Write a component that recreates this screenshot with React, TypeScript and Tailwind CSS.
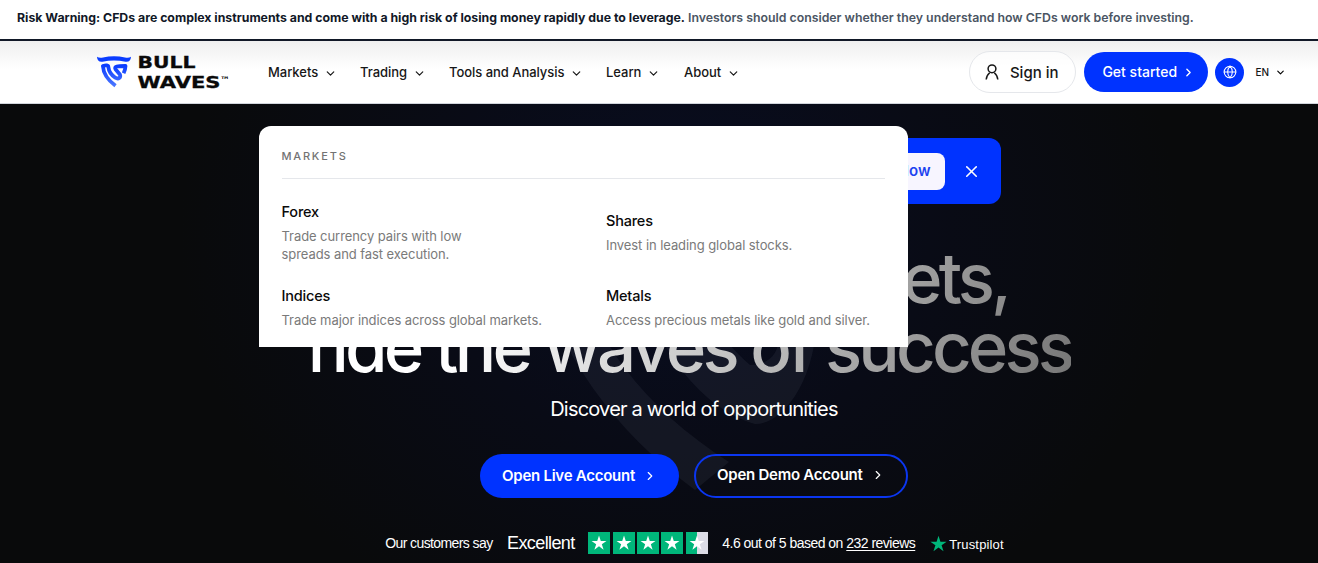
import { ChevronDown, ChevronRight, Globe, X } from 'lucide-react';

const NAV = [
  { label: 'Markets', width: 'w-[92px]' },
  { label: 'Trading', width: 'w-[89px]' },
  { label: 'Tools and Analysis', width: 'w-[157px]' },
  { label: 'Learn', width: 'w-[78px]' },
  { label: 'About', width: 'w-[60px]' },
];

const MARKETS = [
  { title: 'Forex', text: 'Trade currency pairs with low spreads and fast execution.', textWidth: 'w-[200px]' },
  { title: 'Shares', text: 'Invest in leading global stocks.', textWidth: 'w-[280px]' },
  { title: 'Indices', text: 'Trade major indices across global markets.', textWidth: 'w-[280px]' },
  { title: 'Metals', text: 'Access precious metals like gold and silver.', textWidth: 'w-[280px]' },
];

const STAR = 'M12 1.5l2.5 7.6h8l-6.5 4.7 2.5 7.7-6.5-4.8-6.5 4.8 2.5-7.7L1.5 9.1h8z';

function Logo() {
  return (
    <svg className="w-[134px] h-[38px] mt-[3px] shrink-0 overflow-visible" viewBox="0 0 134 38">
      <defs>
        <linearGradient id="bull" x1="0" y1="0" x2="0" y2="1">
          <stop offset="0" stopColor="#0a3cff" />
          <stop offset="1" stopColor="#4a76ff" />
        </linearGradient>
      </defs>
      <path fill="#0a3cff" d="M0 1.7C1.5 2.8 3.5 3 6 2.5 13 .9 21 .9 28 2.5c2.5.5 4.5.3 6-.8-.2 3.8-2.2 5.5-5.5 5-7.5-1.5-15.5-1.5-23 0C2.2 7.200.2 5.500 0 1.700z" />
      <path fill="none" stroke="url(#bull)" strokeWidth="3.8" strokeLinejoin="round" d="M18.500 30.800C10 24.500 6.300 18.500 5.900 11c3.200-1 5.300-.8 5.500 1.200.5 4.700 3 7.800 6.900 10.500 3.200 2 5.800-.2 4.600-3.300l-4.400-5.200c-1.500-3 1.500-3.100 10-3.200-.1 2.800-.7 4.800-1.900 7.300" />
      <g fontFamily="'DejaVu Sans', sans-serif" fontWeight="700" fill="#0a0a0a" stroke="#0a0a0a" strokeWidth="0.3">
        <text x="40.5" y="13" fontSize="15.5" textLength="58" lengthAdjust="spacingAndGlyphs">BULL</text>
        <text x="40.5" y="32.5" fontSize="15.5" textLength="83" lengthAdjust="spacingAndGlyphs">WAVES</text>
        <text x="123" y="27.5" fontSize="9" strokeWidth="0" textLength="10" lengthAdjust="spacingAndGlyphs">™</text>
      </g>
    </svg>
  );
}

function UserIcon() {
  return (
    <svg className="w-[14px] h-[16px] -mt-[2px]" viewBox="0 0 14 16" fill="none" stroke="#171717" strokeWidth="1.5">
      <circle cx="7" cy="4.8" r="3.9" />
      <path d="M1.2 15.5c.2-2.6 1.4-5 3.5-6.8M12.8 15.5c-.2-2.6-1.4-5-3.5-6.8" />
    </svg>
  );
}

function Header() {
  return (
    <header className="flex items-center h-[63px] pl-[97px] border-b border-gray-300 bg-linear-to-b from-[#efefef] from-0% via-white via-45% to-white">
      <Logo />
      <nav className="flex items-center ml-[37px] mt-[2px] text-[13px] tracking-[-0.04px] font-medium text-[#171717]">
        {NAV.map(item => (
          <button key={item.label} className={`flex items-center whitespace-nowrap ${item.width}`}>
            {item.label}
            <ChevronDown className="size-[13px] ml-[6px]" strokeWidth={2.2} />
          </button>
        ))}
      </nav>
      <div className="flex items-center ml-auto mr-[32.5px] text-[15px] font-medium">
        <button className="flex items-center w-[107px] h-[42px] pt-[2px] pl-[15px] gap-[11px] rounded-full border border-gray-200 bg-white/70 text-[#171717] whitespace-nowrap">
          <UserIcon />
          Sign in
        </button>
        <button className="flex items-center w-[124px] h-[40px] pl-[18.5px] ml-2 gap-[5px] rounded-full bg-[#0033ff] text-sm text-white whitespace-nowrap">
          Get started
          <ChevronRight className="size-[13px]" strokeWidth={2.5} />
        </button>
        <button className="flex items-center justify-center size-[29px] ml-[7.5px] rounded-full bg-[#0033ff] text-white">
          <Globe className="size-[14px]" strokeWidth={1.8} />
        </button>
        <span className="ml-[11px] text-[10px] text-[#171717]">EN</span>
        <ChevronDown className="size-[11px] ml-[5.5px]" strokeWidth={2.5} />
      </div>
    </header>
  );
}

function MarketsMenu() {
  return (
    <div className="absolute z-10 left-[258.5px] top-[22px] w-[649px] h-[221px] px-[23px] rounded-t-xl bg-white">
      <p className="h-[53px] pt-[21.5px] border-b border-gray-200 text-[11px] leading-4 font-medium tracking-[1.8px] text-[#737373]">MARKETS</p>
      <div className="grid grid-cols-[324.5px_1fr] grid-rows-[60px_42px] gap-y-[24px] items-center pt-[24px]">
        {MARKETS.map(m => (
          <a key={m.title} className="block">
            <p className="text-[14.5px] leading-[18px] font-medium tracking-[-0.2px] text-[#0a0a0a]">{m.title}</p>
            <p className={`mt-[6px] text-[13px] leading-[18px] tracking-[-0.07px] text-[#7a7a7a] ${m.textWidth}`}>{m.text}</p>
          </a>
        ))}
      </div>
    </div>
  );
}

function Stars() {
  return (
    <div className="flex gap-[2.4px] -mt-px">
      {[0, 1, 2, 3, 4].map(i => (
        <span key={i} className={i < 4 ? 'size-[22px] bg-[#00b67a]' : 'size-[22px] bg-linear-to-r from-[#00b67a] from-50% to-[#dcdce6] to-50%'}>
          <svg className="size-[22px] p-[2.5px]" viewBox="0 0 24 24" fill="#fff"><path d={STAR} /></svg>
        </span>
      ))}
    </div>
  );
}

function Hero() {
  return (
    <section className="relative h-[459px] overflow-hidden bg-[#090a0b] bg-[radial-gradient(ellipse_500px_430px_at_680px_130px,#080d22_0%,#090b16_50%,#090a0b_100%)] text-white">
      <svg className="absolute left-[480px] top-0 w-[440px] h-[459px]" viewBox="480 104 440 459" fill="#8090a8" fillOpacity="0.09">
        <path d="M520 200h45c6 110 60 195 164 262l-34 28C600 420 540 330 520 200z" />
        <path d="M620 200h45c10 70 40 125 85 165 25 0 38-20 22-60h45c2 75-35 120-62 119-70-20-125-115-135-224z" />
      </svg>
      <MarketsMenu />
      <div className="relative flex flex-col items-center pt-[34px] pl-[70px]">
        <div className="flex items-center justify-end w-[613px] h-[66px] pr-[20px] gap-[17px] rounded-xl bg-[#0033ff]">
          <button className="h-[37px] px-[14px] rounded-lg bg-[#f7f5ff] text-[15px] font-semibold text-[#1d43f0]">Claim Now</button>
          <X className="size-[19px]" strokeWidth={2} />
        </div>
        <h1 className="mt-[40px] -ml-[9px] text-center text-[69px] leading-[69px] font-medium tracking-[-3.85px] whitespace-nowrap bg-linear-[108deg] from-white from-22% to-[#777] bg-clip-text text-transparent">
          Conquer the markets,<br />ride the waves of success
        </h1>
        <p className="mt-[13px] text-[20px] leading-7 tracking-[-0.8px]">Discover a world of opportunities</p>
        <div className="flex mt-[31px] gap-[15px] text-[15px] font-semibold tracking-[-0.25px]">
          <button className="flex items-center w-[199px] h-[44px] pl-[22px] gap-2 rounded-full bg-[#0033ff] whitespace-nowrap">
            Open Live Account
            <ChevronRight className="size-[14px]" />
          </button>
          <button className="flex items-center w-[214px] h-[44px] pl-[21px] pb-[2px] gap-2 rounded-full border-2 border-[#0b36f0] whitespace-nowrap">
            Open Demo Account
            <ChevronRight className="size-[14px]" />
          </button>
        </div>
        <div className="flex items-center mt-[31.5px] ml-px font-['Liberation_Sans',sans-serif] text-[14px] tracking-[-0.6px] whitespace-nowrap">
          <span>Our customers say</span>
          <span className="ml-[14.5px] mr-[13.5px] text-[18px]">Excellent</span>
          <Stars />
          <span className="ml-[14.5px] tracking-[-0.52px]">4.6 out of 5 based on <u className="underline-offset-2">232 reviews</u></span>
          <svg className="size-[17px] ml-[15px]" viewBox="1 1 22 21" fill="#00b67a"><path d={STAR} /></svg>
          <span className="ml-[2px] mt-1 text-[13px] tracking-[0.15px]">Trustpilot</span>
        </div>
      </div>
    </section>
  );
}

export default function App() {
  return (
    <div className="w-full h-[563px] overflow-hidden bg-white font-[Inter,sans-serif]">
      <div className="h-[41px] pl-[17px] border-b-2 border-[#111827] text-[12.3px] leading-[35px] font-semibold text-[#4b5563] whitespace-nowrap">
        <strong className="font-bold text-[#111827]">Risk Warning: CFDs are complex instruments and come with a high risk of losing money rapidly due to leverage.</strong>{' '}
        Investors should consider whether they understand how CFDs work before investing.
      </div>
      <Header />
      <Hero />
    </div>
  );
}
